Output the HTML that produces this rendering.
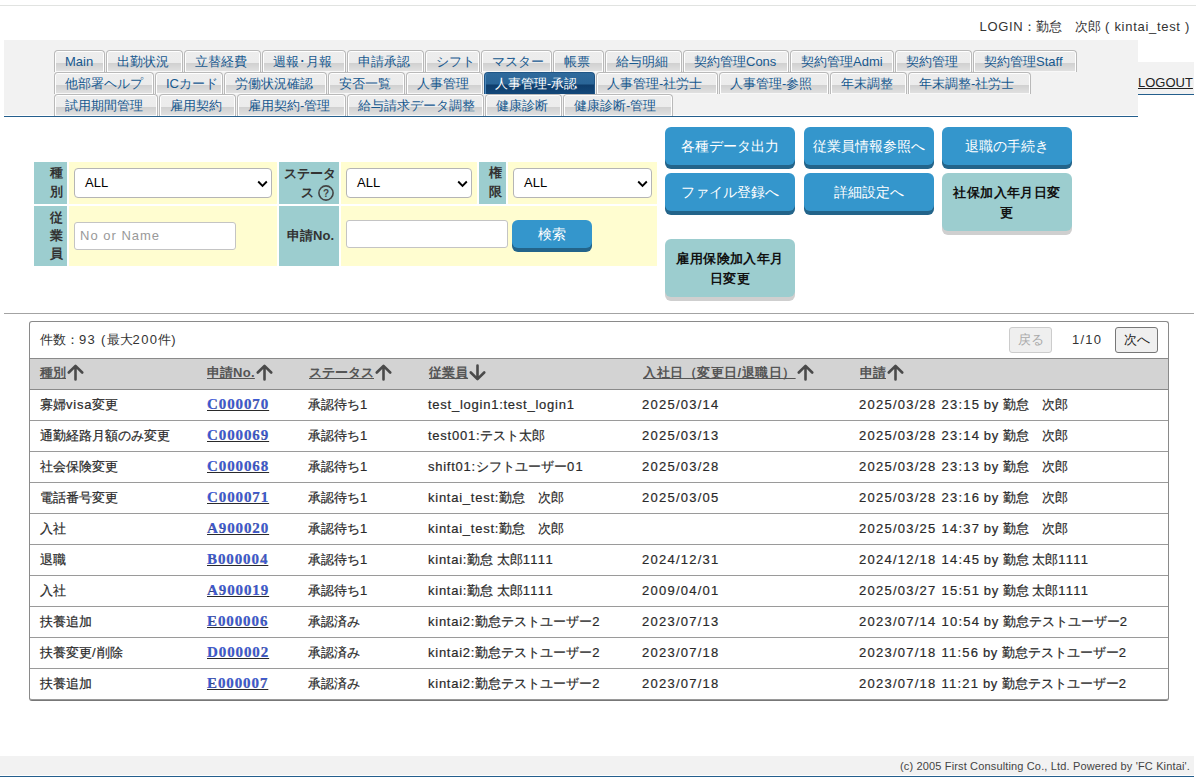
<!DOCTYPE html>
<html><head><meta charset="utf-8">
<style>
*{box-sizing:border-box}
html,body{margin:0;padding:0;width:1196px;height:779px;overflow:hidden;background:#fff;font-family:"Liberation Sans",sans-serif;color:#333}
.abs{position:absolute}
#topline{position:absolute;left:0;top:5px;width:1196px;height:1px;background:#e1e3e1}
#login{position:absolute;right:6px;top:18px;font-size:13px;line-height:18px;color:#333;white-space:nowrap}
#nav{position:absolute;left:4px;top:40px;width:1134px;height:75px;background:#f2f2f2}
#navline{position:absolute;left:4px;top:116px;width:1134px;height:1px;background:#245f8d}
#logout{position:absolute;left:1138px;top:62px;width:56px;height:33px;background:#f2f2f2;border-bottom:1px solid #245f8d}
#logout a{position:absolute;left:0;top:13px;font-size:13px;font-weight:normal;color:#222;text-decoration:underline;line-height:16px;letter-spacing:0px}
.tab{position:absolute;height:22px;border:1px solid #b9b9b9;border-bottom:none;border-radius:4px 4px 0 0;
 background:linear-gradient(to bottom,#fff 0,#fff 1px,#ededed 1px,#ececec 12px,#d0d0d0 12px,#e0e0e0 20px,#f8f8f8 20px,#f8f8f8 21px);
 box-shadow:inset 1px 0 0 #fff, inset -1px 0 0 #fff;
 font-size:13px;line-height:21px;padding-left:10px;color:#17598f;white-space:nowrap;overflow:hidden}
.tab.act{background:linear-gradient(to bottom,#2f6a9c 0px,#2a6597 11px,#0f3d6b 12px,#14497b 22px);border-color:#1f5585;color:#fff;box-shadow:inset 1px 0 0 #4d88bb}
/* search */
.th{position:absolute;background:#9ccdcf;font-size:13px;font-weight:bold;color:#333;text-align:right;line-height:19px}
.td{position:absolute;background:#fffdd0}
.sel{position:absolute;height:30px;border:1px solid #b5b5b5;border-radius:4px;background:#fff;font-size:13px;color:#000;padding-left:10px;line-height:28px}
.sel svg{position:absolute;right:3px;top:11px}
.inp{position:absolute;height:28px;border:1px solid #c4c4c4;border-radius:3px;background:#fff;font-size:13px;color:#999;padding-left:5px;line-height:25px}
.btn{position:absolute;width:130px;height:38px;border-radius:6px;background:#3496cc;box-shadow:0 4px 0 #23648a;color:#fff;font-size:14px;text-align:center;line-height:39px;white-space:nowrap}
.btn2{position:absolute;width:130px;border-radius:6px;background:#9ccdcf;box-shadow:0 4px 0 #cfcfcf;color:#111;font-size:13px;font-weight:bold;text-align:center;line-height:20px;letter-spacing:0.4px}
#hr{position:absolute;left:4px;top:313px;width:1190px;height:1px;background:#a3a3a3}
#res{position:absolute;left:29px;top:321px;width:1140px;height:380px;border:1px solid #8a8a8a;border-bottom:2px solid #777;border-radius:3px}
#count{position:absolute;left:10px;top:9px;font-size:13px;line-height:18px}
.pbtn{position:absolute;top:5px;height:26px;border:1px solid #777;border-radius:3px;background:#efefef;font-size:13px;line-height:24px;text-align:center;color:#222}
#hdr{position:absolute;left:0;top:36px;width:1138px;height:32px;background:#d3d3d3;border-top:1px solid #8a8a8a;border-bottom:1px solid #8a8a8a}
#hdr span{position:absolute;top:5px;font-size:13px;font-weight:bold;color:#555;line-height:18px;white-space:nowrap}
#hdr u{text-decoration:underline}
.tr{position:absolute;left:0;width:1138px;height:31px;border-bottom:1px solid #9a9a9a}
.tr span,.tr a{position:absolute;top:6px;font-size:13px;line-height:18px;white-space:nowrap;color:#2a2a2a;-webkit-text-stroke:0.2px #2a2a2a}
.tr a.id{font-family:"Liberation Serif",serif;font-weight:bold;font-size:15px;color:#3c5ad8;text-decoration:underline;top:5px;margin-left:1px;letter-spacing:0.9px}
i{font-style:normal;letter-spacing:0.75px}
b.d{font-weight:normal;letter-spacing:1.25px}
.arr{display:inline-block;vertical-align:top;margin-top:0px;margin-left:1px}
#foot{position:absolute;left:0;top:756px;width:1194px;height:19px;background:#f2f2f2}
#footline{position:absolute;left:0;top:776px;width:1194px;height:1px;background:#245f8d}
#foot span{position:absolute;right:4px;top:2px;font-size:11px;line-height:16px;color:#444;white-space:nowrap;letter-spacing:0.15px}
</style></head><body>
<div id="topline"></div>
<div id="login"><i style="letter-spacing:0.7px">LOGIN</i>：勤怠　次郎 <i style="letter-spacing:0.7px">( kintai_test )</i></div>
<div id="nav"></div><div id="navline"></div>
<div id="logout"><a>LOGOUT</a></div>
<div class="tab" style="left:54px;top:50px;width:51px">Main</div>
<div class="tab" style="left:106px;top:50px;width:77px">出勤状況</div>
<div class="tab" style="left:184px;top:50px;width:77px">立替経費</div>
<div class="tab" style="left:262px;top:50px;width:84px">週報･月報</div>
<div class="tab" style="left:347px;top:50px;width:77px">申請承認</div>
<div class="tab" style="left:425px;top:50px;width:55px">シフト</div>
<div class="tab" style="left:481px;top:50px;width:71px">マスター</div>
<div class="tab" style="left:553px;top:50px;width:51px">帳票</div>
<div class="tab" style="left:605px;top:50px;width:77px">給与明細</div>
<div class="tab" style="left:683px;top:50px;width:106px">契約管理Cons</div>
<div class="tab" style="left:790px;top:50px;width:104px">契約管理Admi</div>
<div class="tab" style="left:895px;top:50px;width:77px">契約管理</div>
<div class="tab" style="left:973px;top:50px;width:104px">契約管理Staff</div>
<div class="tab" style="left:54px;top:72px;width:100px">他部署ヘルプ</div>
<div class="tab" style="left:155px;top:72px;width:68px">ICカード</div>
<div class="tab" style="left:224px;top:72px;width:103px">労働状況確認</div>
<div class="tab" style="left:328px;top:72px;width:77px">安否一覧</div>
<div class="tab" style="left:406px;top:72px;width:77px">人事管理</div>
<div class="tab act" style="left:484px;top:72px;width:111px">人事管理-承認</div>
<div class="tab" style="left:596px;top:72px;width:122px">人事管理-社労士</div>
<div class="tab" style="left:719px;top:72px;width:110px">人事管理-参照</div>
<div class="tab" style="left:830px;top:72px;width:77px">年末調整</div>
<div class="tab" style="left:908px;top:72px;width:123px">年末調整-社労士</div>
<div class="tab" style="left:54px;top:94px;width:104px">試用期間管理</div>
<div class="tab" style="left:159px;top:94px;width:77px">雇用契約</div>
<div class="tab" style="left:237px;top:94px;width:109px">雇用契約-管理</div>
<div class="tab" style="left:347px;top:94px;width:137px">給与請求データ調整</div>
<div class="tab" style="left:485px;top:94px;width:77px">健康診断</div>
<div class="tab" style="left:563px;top:94px;width:110px">健康診断-管理</div>

<div class="th" style="left:34px;top:162px;width:33px;height:42px;padding:1px 4px 0 12px">種別</div>
<div class="td" style="left:69px;top:162px;width:208px;height:42px"></div>
<div class="th" style="left:279px;top:162px;width:60px;height:42px;padding:2px 3px 0 0">ステータ<br><span style="position:relative;left:-2px">ス <svg style="vertical-align:-4px" width="16" height="16" viewBox="0 0 16 16"><circle cx="8" cy="8" r="7.1" fill="none" stroke="#444" stroke-width="1.6"/><text x="8" y="12" text-anchor="middle" font-size="10" fill="#444" font-family="Liberation Sans">?</text></svg></span></div>
<div class="td" style="left:341px;top:162px;width:136px;height:42px"></div>
<div class="th" style="left:479px;top:162px;width:27px;height:42px;padding:1px 4px 0 6px">権限</div>
<div class="td" style="left:508px;top:162px;width:149px;height:42px"></div>
<div class="th" style="left:34px;top:206px;width:33px;height:60px;padding:3px 4px 0 12px;line-height:18px">従業員</div>
<div class="td" style="left:69px;top:206px;width:208px;height:60px"></div>
<div class="th" style="left:279px;top:206px;width:60px;height:60px;padding:20px 5px 0 0">申請No.</div>
<div class="td" style="left:341px;top:206px;width:316px;height:60px"></div>

<div class="sel" style="left:74px;top:168px;width:198px">ALL<svg width="11" height="8" viewBox="0 0 11 8"><path d="M1.2 1.5 L5.5 5.8 L9.8 1.5" fill="none" stroke="#000" stroke-width="1.9"/></svg></div>
<div class="sel" style="left:346px;top:168px;width:126px">ALL<svg width="11" height="8" viewBox="0 0 11 8"><path d="M1.2 1.5 L5.5 5.8 L9.8 1.5" fill="none" stroke="#000" stroke-width="1.9"/></svg></div>
<div class="sel" style="left:513px;top:168px;width:139px">ALL<svg width="11" height="8" viewBox="0 0 11 8"><path d="M1.2 1.5 L5.5 5.8 L9.8 1.5" fill="none" stroke="#000" stroke-width="1.9"/></svg></div>
<div class="inp" style="left:74px;top:222px;width:162px;letter-spacing:1px">No or Name</div>
<div class="inp" style="left:346px;top:220px;width:162px"></div>
<div class="btn" style="left:512px;top:220px;width:80px;height:28px;line-height:28px;font-size:14px">検索</div>

<div class="btn" style="left:665px;top:127px">各種データ出力</div>
<div class="btn" style="left:804px;top:127px">従業員情報参照へ</div>
<div class="btn" style="left:942px;top:127px">退職の手続き</div>
<div class="btn" style="left:665px;top:173px">ファイル登録へ</div>
<div class="btn" style="left:804px;top:173px">詳細設定へ</div>
<div class="btn2" style="left:942px;top:173px;height:58px;padding:10px 0 0;white-space:nowrap">社保加入年月日変<br>更</div>
<div class="btn2" style="left:665px;top:239px;height:58px;padding:10px 0 0;white-space:nowrap">雇用保険加入年月<br>日変更</div>

<div id="hr"></div>
<div id="res">
 <div id="count">件数：<i style="letter-spacing:1.3px">93 (</i>最大<i style="letter-spacing:1.3px">200</i>件<i>)</i></div>
 <div class="pbtn" style="left:979px;width:43px;border-color:#ccc;color:#aaa">戻る</div>
 <span style="position:absolute;left:1042px;top:9px;font-size:13px;line-height:18px;letter-spacing:1.2px">1/10</span>
 <div class="pbtn" style="left:1085px;width:43px">次へ</div>
 <div id="hdr">
  <span style="left:10px"><u>種別</u><svg class="arr" width="17" height="17" viewBox="0 0 17 17"><path d="M8.5 15.5V2.5M1.8 8.5L8.5 1.8L15.2 8.5" fill="none" stroke="#4a4a4a" stroke-width="2.6" stroke-linecap="round" stroke-linejoin="round"/></svg></span>
  <span style="left:177px"><u>申請<i style="letter-spacing:0.3px">No.</i></u><svg class="arr" width="17" height="17" viewBox="0 0 17 17"><path d="M8.5 15.5V2.5M1.8 8.5L8.5 1.8L15.2 8.5" fill="none" stroke="#4a4a4a" stroke-width="2.6" stroke-linecap="round" stroke-linejoin="round"/></svg></span>
  <span style="left:279px"><u>ステータス</u><svg class="arr" width="17" height="17" viewBox="0 0 17 17"><path d="M8.5 15.5V2.5M1.8 8.5L8.5 1.8L15.2 8.5" fill="none" stroke="#4a4a4a" stroke-width="2.6" stroke-linecap="round" stroke-linejoin="round"/></svg></span>
  <span style="left:399px"><u>従業員</u><svg class="arr" width="17" height="17" viewBox="0 0 17 17"><path d="M8.5 1.5V14.5M1.8 8.5L8.5 15.2L15.2 8.5" fill="none" stroke="#4a4a4a" stroke-width="2.6" stroke-linecap="round" stroke-linejoin="round"/></svg></span>
  <span style="left:613px"><u style="letter-spacing:0.5px">入社日（変更日/退職日）</u><svg class="arr" width="17" height="17" viewBox="0 0 17 17"><path d="M8.5 15.5V2.5M1.8 8.5L8.5 1.8L15.2 8.5" fill="none" stroke="#4a4a4a" stroke-width="2.6" stroke-linecap="round" stroke-linejoin="round"/></svg></span>
  <span style="left:830px"><u>申請</u><svg class="arr" width="17" height="17" viewBox="0 0 17 17"><path d="M8.5 15.5V2.5M1.8 8.5L8.5 1.8L15.2 8.5" fill="none" stroke="#4a4a4a" stroke-width="2.6" stroke-linecap="round" stroke-linejoin="round"/></svg></span>
 </div>
 <div style="position:absolute;left:0;top:0">
 <div class="tr" style="top:68px">
<span style="left:10px">寡婦<i>visa</i>変更</span>
<a class="id" style="left:176px">C000070</a>
<span style="left:278px">承認待ち<b class="d">1</b></span>
<span style="left:398px"><i>test_login1:test_login1</i></span>
<span style="left:612px"><b class="d">2025/03/14</b></span>
<span style="left:829px"><b class="d">2025/03/28 23:15</b> <i>by</i> 勤怠　次郎</span>
</div>
<div class="tr" style="top:99px">
<span style="left:10px">通勤経路月額のみ変更</span>
<a class="id" style="left:176px">C000069</a>
<span style="left:278px">承認待ち<b class="d">1</b></span>
<span style="left:398px"><i>test001:</i>テスト太郎</span>
<span style="left:612px"><b class="d">2025/03/13</b></span>
<span style="left:829px"><b class="d">2025/03/28 23:14</b> <i>by</i> 勤怠　次郎</span>
</div>
<div class="tr" style="top:130px">
<span style="left:10px">社会保険変更</span>
<a class="id" style="left:176px">C000068</a>
<span style="left:278px">承認待ち<b class="d">1</b></span>
<span style="left:398px"><i>shift01:</i>シフトユーザー<b class="d">01</b></span>
<span style="left:612px"><b class="d">2025/03/28</b></span>
<span style="left:829px"><b class="d">2025/03/28 23:13</b> <i>by</i> 勤怠　次郎</span>
</div>
<div class="tr" style="top:161px">
<span style="left:10px">電話番号変更</span>
<a class="id" style="left:176px">C000071</a>
<span style="left:278px">承認待ち<b class="d">1</b></span>
<span style="left:398px"><i>kintai_test:</i>勤怠　次郎</span>
<span style="left:612px"><b class="d">2025/03/05</b></span>
<span style="left:829px"><b class="d">2025/03/28 23:16</b> <i>by</i> 勤怠　次郎</span>
</div>
<div class="tr" style="top:192px">
<span style="left:10px">入社</span>
<a class="id" style="left:176px">A900020</a>
<span style="left:278px">承認待ち<b class="d">1</b></span>
<span style="left:398px"><i>kintai_test:</i>勤怠　次郎</span>
<span style="left:612px"></span>
<span style="left:829px"><b class="d">2025/03/25 14:37</b> <i>by</i> 勤怠　次郎</span>
</div>
<div class="tr" style="top:223px">
<span style="left:10px">退職</span>
<a class="id" style="left:176px">B000004</a>
<span style="left:278px">承認待ち<b class="d">1</b></span>
<span style="left:398px"><i>kintai:</i>勤怠 太郎<b class="d">1111</b></span>
<span style="left:612px"><b class="d">2024/12/31</b></span>
<span style="left:829px"><b class="d">2024/12/18 14:45</b> <i>by</i> 勤怠 太郎<b class="d">1111</b></span>
</div>
<div class="tr" style="top:254px">
<span style="left:10px">入社</span>
<a class="id" style="left:176px">A900019</a>
<span style="left:278px">承認待ち<b class="d">1</b></span>
<span style="left:398px"><i>kintai:</i>勤怠 太郎<b class="d">1111</b></span>
<span style="left:612px"><b class="d">2009/04/01</b></span>
<span style="left:829px"><b class="d">2025/03/27 15:51</b> <i>by</i> 勤怠 太郎<b class="d">1111</b></span>
</div>
<div class="tr" style="top:285px">
<span style="left:10px">扶養追加</span>
<a class="id" style="left:176px">E000006</a>
<span style="left:278px">承認済み</span>
<span style="left:398px"><i>kintai2:</i>勤怠テストユーザー<b class="d">2</b></span>
<span style="left:612px"><b class="d">2023/07/13</b></span>
<span style="left:829px"><b class="d">2023/07/14 10:54</b> <i>by</i> 勤怠テストユーザー<b class="d">2</b></span>
</div>
<div class="tr" style="top:316px">
<span style="left:10px">扶養変更<b class="d">/</b>削除</span>
<a class="id" style="left:176px">D000002</a>
<span style="left:278px">承認済み</span>
<span style="left:398px"><i>kintai2:</i>勤怠テストユーザー<b class="d">2</b></span>
<span style="left:612px"><b class="d">2023/07/18</b></span>
<span style="left:829px"><b class="d">2023/07/18 11:56</b> <i>by</i> 勤怠テストユーザー<b class="d">2</b></span>
</div>
<div class="tr" style="top:347px">
<span style="left:10px">扶養追加</span>
<a class="id" style="left:176px">E000007</a>
<span style="left:278px">承認済み</span>
<span style="left:398px"><i>kintai2:</i>勤怠テストユーザー<b class="d">2</b></span>
<span style="left:612px"><b class="d">2023/07/18</b></span>
<span style="left:829px"><b class="d">2023/07/18 11:21</b> <i>by</i> 勤怠テストユーザー<b class="d">2</b></span>
</div>
 </div>
</div>
<div id="foot"><span>(c) 2005 First Consulting Co., Ltd. Powered by 'FC Kintai'.</span></div><div id="footline"></div>
</body></html>
